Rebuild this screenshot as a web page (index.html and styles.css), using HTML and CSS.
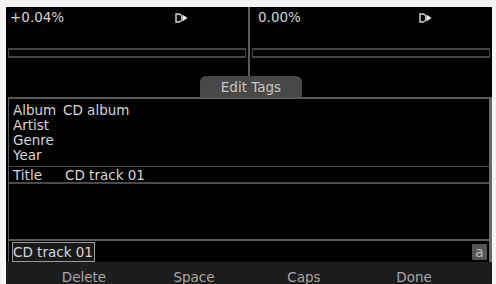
FILE: index.html
```html
<!DOCTYPE html>
<html lang="en">
<head>
    <meta charset="UTF-8">
    <title>Edit Tags</title>
    <link rel="stylesheet" href="styles.css">
</head>
<body>
    <div class="screen">
        <div class="meters">
            <div class="meter">
                <div class="readout">
                    <span class="level">+0.04%</span>
                    <svg class="route-icon" width="13" height="10" viewBox="0 0 13 10">
                        <path d="M1 1h2.5a3.5 4 0 0 1 0 8h-2.5z" fill="none" stroke="#dcdcdc" stroke-width="1.4"/>
                        <path d="M7.5 1.5l5 3.5-5 3.5z" fill="#e8e8e8"/>
                    </svg>
                </div>
                <div class="bar"></div>
            </div>
            <div class="divider"></div>
            <div class="meter">
                <div class="readout">
                    <span class="level level-unsigned">0.00%</span>
                    <svg class="route-icon" width="13" height="10" viewBox="0 0 13 10">
                        <path d="M1 1h2.5a3.5 4 0 0 1 0 8h-2.5z" fill="none" stroke="#dcdcdc" stroke-width="1.4"/>
                        <path d="M7.5 1.5l5 3.5-5 3.5z" fill="#e8e8e8"/>
                    </svg>
                </div>
                <div class="bar"></div>
            </div>
        </div>

        <div class="tab-row">
            <div class="tab">Edit Tags</div>
        </div>

        <div class="tag-panel">
            <div class="tag-list">
                <div class="tag"><span class="tag-name">Album</span><span class="tag-value">CD album</span></div>
                <div class="tag"><span class="tag-name">Artist</span><span class="tag-value"></span></div>
                <div class="tag"><span class="tag-name">Genre</span><span class="tag-value"></span></div>
                <div class="tag"><span class="tag-name">Year</span><span class="tag-value"></span></div>
                <div class="tag selected"><span class="tag-name">Title</span><span class="tag-value">CD track 01</span></div>
            </div>
            <div class="entry">
                <span class="entry-text">CD track 01</span>
                <span class="case-key">a</span>
            </div>
        </div>

        <div class="keys">
            <span class="key">Delete</span>
            <span class="key">Space</span>
            <span class="key">Caps</span>
            <span class="key">Done</span>
        </div>
    </div>
</body>
</html>
```

FILE: styles.css
```css
/* General Styles */
body {
    margin: 0;
    padding: 0;
    background-color: #f4f4f4;
    font-family: 'DejaVu Sans', 'Liberation Sans', sans-serif;
    font-size: 13.5px;
    line-height: 14px;
    color: #d6d6d6;
}

.screen {
    width: 486px;
    height: 277px;
    margin: 7px 0 0 6px;
    background-color: #000;
    display: flex;
    flex-direction: column;
    overflow: hidden;
}

/* Level meters */
.meters {
    display: flex;
    height: 69px;
}

.meter {
    flex: 1;
    padding-top: 3px;
}

.divider {
    width: 2px;
    background-color: #5c5c5c;
}

.readout {
    display: flex;
    align-items: center;
    height: 14px;
    padding-left: 4px;
}

.level {
    width: 165px;
}

.level-unsigned {
    padding-left: 4px;
    width: 161px;
}

.route-icon {
    display: block;
    margin-top: 1px;
}

.bar {
    height: 6px;
    margin: 24px 2px 0;
    border: 2px solid #454545;
    border-left-width: 1px;
    border-right-width: 1px;
}

/* Tab */
.tab-row {
    height: 21px;
    display: flex;
    justify-content: center;
}

.tab {
    width: 102px;
    margin-left: 4px;
    background-color: #484848;
    border-radius: 6px 6px 0 0;
    color: #c6c6c6;
    text-align: center;
    line-height: 22px;
}

/* Tag panel */
.tag-panel {
    flex: 1;
    display: flex;
    flex-direction: column;
    margin-left: 2px;
    border-top: 2px solid #5a5a5a;
    border-left: 1px solid #5a5a5a;
    border-right: 3px solid #6a6a6a;
}

.tag-list {
    flex: 1;
    padding-top: 4px;
}

.tag {
    display: flex;
    padding-left: 4px;
    line-height: 15px;
}

.tag-name {
    width: 50px;
}

.selected {
    margin-top: 3px;
    border-top: 1px solid #4a4a4a;
    border-bottom: 2px solid #4a4a4a;
    line-height: 14px;
    padding-top: 1px;
}

.selected .tag-value {
    padding-left: 2px;
}

.entry {
    height: 21px;
    display: flex;
    align-items: center;
    justify-content: space-between;
    border-top: 2px solid #5a5a5a;
    padding: 0 2px 0 3px;
}

.entry-text {
    border: 1px solid #9a9a9a;
    background-color: #1a1a1a;
    padding: 2px 1px 1px 0;
    line-height: 15px;
}

.case-key {
    width: 15px;
    height: 16px;
    background-color: #555;
    color: #bdbdbd;
    text-align: center;
    line-height: 16px;
}

/* Soft keys */
.keys {
    height: 22px;
    background-color: #1d1d1d;
    display: grid;
    grid-template-columns: repeat(4, 110px);
    justify-content: center;
    color: #a8a8a8;
}

.key {
    text-align: center;
    padding-top: 8px;
}
```
